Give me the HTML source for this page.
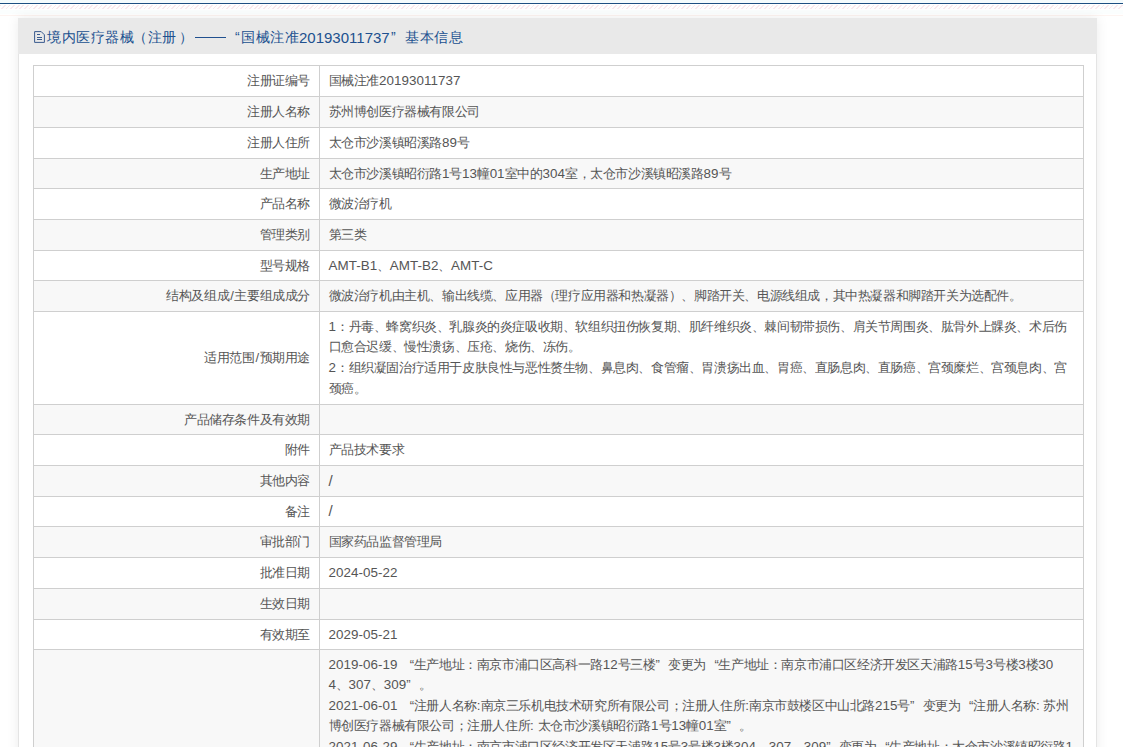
<!DOCTYPE html>
<html><head><meta charset="utf-8">
<style>
html,body{margin:0;padding:0;background:#fff;width:1123px;height:747px;overflow:hidden;font-family:"Liberation Sans",sans-serif;}
.topline{position:absolute;left:0;top:0;width:1123px;height:3px;background:#f4fbfd;}
.blue{position:absolute;left:0;top:3px;width:1123px;height:1px;background:#1d4f82;}
.stripes{position:absolute;left:0;top:5px;width:1123px;height:4px;background:repeating-linear-gradient(135deg,#f9e9ee 0 1.2px,#fefefe 1.2px 3.25px);}
.peach{position:absolute;left:0;top:15px;width:1123px;height:1px;background:#fdf4f1;}
.cy{position:absolute;left:0;top:10px;width:1123px;height:4px;background:#fbfefe;}
.panel{position:absolute;left:18px;top:18px;width:1079px;height:760px;background:#fff;box-shadow:0 0 12px rgba(0,0,0,0.08);border-left:1px solid #e4e4e4;border-right:1px solid #e4e4e4;box-sizing:border-box;}
.ph{position:absolute;left:-1px;top:0;width:1079px;height:36px;background:#e9e9e9;}
.title{position:absolute;left:0;top:11px;width:600px;height:20px;font-size:14px;line-height:17px;color:#20508f;white-space:nowrap;}
.title span{position:absolute;top:0;letter-spacing:0.5px;}
.title .tn{font-size:15px;letter-spacing:0;}
.dash{position:absolute;left:176.7px;top:8px;width:31.5px;height:1px;background:#20508f;}
.icon{position:absolute;left:16px;top:13px;width:11px;height:12px;}
table{position:absolute;left:14px;top:47px;width:1051px;border-collapse:collapse;table-layout:fixed;font-size:13px;letter-spacing:-0.4px;color:#555;}
td{border:1px solid #cfcfcf;padding:1px 8.5px 0 9px;line-height:20.55px;white-space:nowrap;box-sizing:border-box;}
td.l{text-align:right;}
tr{height:30px;}
tr.g td{background:#f8f8f8;}
td.m{padding-top:4.6px;padding-bottom:4.6px;}
.n{font-size:13.4px;letter-spacing:0.05px;}
.sl{padding:0 1px;}
.ql{display:inline-block;width:12.5px;text-align:right;}
.qr{display:inline-block;width:12.5px;text-align:left;}
</style></head><body>
<div class="topline"></div><div class="blue"></div><div class="stripes"></div><div class="cy"></div><div class="peach"></div>
<div class="panel">
 <div class="ph">
  <svg class="icon" viewBox="0 0 11 12"><path d="M0.6 0.6H7.2L10.4 3.8V11.4H0.6Z M3 3.5H6 M3 6.5H8 M3 8.5H8" fill="none" stroke="#3a5b8f" stroke-width="1"/></svg>
  <div class="title">
   <span style="left:29px">境内医疗器械</span>
   <span style="left:115px">（</span>
   <span style="left:129.5px">注册</span>
   <span style="left:161px">）</span>
   <i class="dash"></i>
   <span style="left:217px">“</span>
   <span style="left:223px">国械注准</span>
   <span class="tn" style="left:281px">20193011737</span>
   <span style="left:373px">”</span>
   <span style="left:387px">基本信息</span>
  </div>
 </div>
 <table>
 <colgroup><col style="width:285.5px"><col></colgroup>
 <tr style="height:31px"><td class="l">注册证编号</td><td>国械注准<span class="n">20193011737</span></td></tr>
 <tr class="g" style="height:31px"><td class="l">注册人名称</td><td>苏州博创医疗器械有限公司</td></tr>
 <tr style="height:31px"><td class="l">注册人住所</td><td>太仓市沙溪镇昭溪路<span class="n">89</span>号</td></tr>
 <tr class="g" style="height:30px"><td class="l">生产地址</td><td>太仓市沙溪镇昭衍路<span class="n">1</span>号<span class="n">13</span>幢<span class="n">01</span>室中的<span class="n">304</span>室，太仓市沙溪镇昭溪路<span class="n">89</span>号</td></tr>
 <tr style="height:31px"><td class="l">产品名称</td><td>微波治疗机</td></tr>
 <tr class="g" style="height:31px"><td class="l">管理类别</td><td>第三类</td></tr>
 <tr style="height:30px"><td class="l">型号规格</td><td><span class="n">AMT-B1</span>、<span class="n">AMT-B2</span>、<span class="n">AMT-C</span></td></tr>
 <tr class="g" style="height:31px"><td class="l">结构及组成<span class="sl">/</span>主要组成成分</td><td>微波治疗机由主机、输出线缆、应用器（理疗应用器和热凝器）、脚踏开关、电源线组成，其中热凝器和脚踏开关为选配件。</td></tr>
 <tr style="height:93px"><td class="l">适用范围<span class="sl">/</span>预期用途</td><td class="m"><span class="n">1</span>：丹毒、蜂窝织炎、乳腺炎的炎症吸收期、软组织扭伤恢复期、肌纤维织炎、棘间韧带损伤、肩关节周围炎、肱骨外上髁炎、术后伤<br>口愈合迟缓、慢性溃疡、压疮、烧伤、冻伤。<br><span class="n">2</span>：组织凝固治疗适用于皮肤良性与恶性赘生物、鼻息肉、食管瘤、胃溃疡出血、胃癌、直肠息肉、直肠癌、宫颈糜烂、宫颈息肉、宫<br>颈癌。</td></tr>
 <tr class="g" style="height:30px"><td class="l">产品储存条件及有效期</td><td></td></tr>
 <tr style="height:31px"><td class="l">附件</td><td>产品技术要求</td></tr>
 <tr class="g" style="height:31px"><td class="l">其他内容</td><td><span class="n" style="font-size:15px">/</span></td></tr>
 <tr style="height:30px"><td class="l">备注</td><td><span class="n" style="font-size:15px">/</span></td></tr>
 <tr class="g" style="height:31px"><td class="l">审批部门</td><td>国家药品监督管理局</td></tr>
 <tr style="height:31px"><td class="l">批准日期</td><td><span class="n">2024-05-22</span></td></tr>
 <tr class="g" style="height:31px"><td class="l">生效日期</td><td></td></tr>
 <tr style="height:30px"><td class="l">有效期至</td><td><span class="n">2029-05-21</span></td></tr>
 <tr class="g"><td class="l"></td><td class="m"><span class="n">2019-06-19 </span><span class="ql">“</span>生产地址：南京市浦口区高科一路<span class="n">12</span>号三楼<span class="qr">”</span>变更为<span class="ql">“</span>生产地址：南京市浦口区经济开发区天浦路<span class="n">15</span>号<span class="n">3</span>号楼<span class="n">3</span>楼<span class="n">30</span><br><span class="n">4</span>、<span class="n">307</span>、<span class="n">309</span><span class="qr">”</span>。<br><span class="n">2021-06-01 </span><span class="ql">“</span>注册人名称<span class="n">:</span>南京三乐机电技术研究所有限公司；注册人住所<span class="n">:</span>南京市鼓楼区中山北路<span class="n">215</span>号<span class="qr">”</span>变更为<span class="ql">“</span>注册人名称<span class="n">: </span>苏州<br>博创医疗器械有限公司；注册人住所<span class="n">: </span>太仓市沙溪镇昭衍路<span class="n">1</span>号<span class="n">13</span>幢<span class="n">01</span>室<span class="qr">”</span>。<br><span class="n">2021-06-29 </span><span class="ql">“</span>生产地址：南京市浦口区经济开发区天浦路<span class="n">15</span>号<span class="n">3</span>号楼<span class="n">3</span>楼<span class="n">304</span>、<span class="n">307</span>、<span class="n">309</span><span class="qr">”</span>变更为<span class="ql">“</span>生产地址：太仓市沙溪镇昭衍路<span class="n">1</span><br>号<span class="n">13</span>幢<span class="n">01</span>室中的<span class="n">304</span>室<span class="qr">”</span>。</td></tr>
 </table>
</div>
</body></html>
